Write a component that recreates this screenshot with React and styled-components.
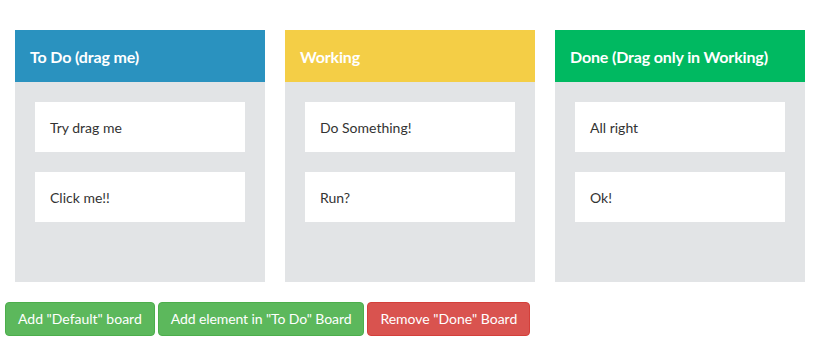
import React from "react";
import styled, { createGlobalStyle } from "styled-components";

const Global = createGlobalStyle`
  html, body { margin: 0; padding: 0; background: #fff; }
  body { font-family: Lato, "Helvetica Neue", Arial, sans-serif; color: #333; }
  * { box-sizing: border-box; }
`;

const Page = styled.div`
  display: flex;
  flex-direction: column;
`;

const Boards = styled.div`
  display: flex;
  gap: 20px;
  padding: 30px 0 0 15px;
`;

const Board = styled.div`
  width: 250px;
  background: #e2e4e6;
  display: flex;
  flex-direction: column;
`;

const Header = styled.div`
  height: 52px;
  padding: 0 15px;
  display: flex;
  align-items: center;
  background: ${(p) => p.$color};
  color: #fff;
  font-size: 16px;
  font-weight: 700;
  letter-spacing: -0.15px;
`;

const Drag = styled.div`
  min-height: 200px;
  padding: 20px;
  display: flex;
  flex-direction: column;
  gap: 20px;
`;

const Item = styled.div`
  background: #fff;
  height: 50px;
  padding: 0 15px;
  display: flex;
  align-items: center;
  font-size: 14px;
`;

const Actions = styled.div`
  display: flex;
  gap: 3px;
  padding: 20px 0 0 5px;
`;

const Button = styled.button`
  font-family: Lato, "Helvetica Neue", Arial, sans-serif;
  font-size: 14px;
  line-height: 20px;
  padding: 6px 12px;
  border-radius: 4px;
  color: #fff;
  cursor: pointer;
  letter-spacing: ${(p) => (p.$tight ? "-0.1px" : "0")};
  background: ${(p) => (p.$danger ? "#d9534f" : "#5cb85c")};
  border: 1px solid ${(p) => (p.$danger ? "#d43f3a" : "#4cae4c")};
`;

const boards = [
  { title: "To Do (drag me)", color: "#2a92bf", items: ["Try drag me", "Click me!!"] },
  { title: "Working", color: "#f4ce46", items: ["Do Something!", "Run?"] },
  { title: "Done (Drag only in Working)", color: "#00b961", items: ["All right", "Ok!"] },
];

export default function App() {
  return (
    <Page>
      <Global />
      <Boards>
        {boards.map((b) => (
          <Board key={b.title}>
            <Header $color={b.color}>{b.title}</Header>
            <Drag>
              {b.items.map((i) => (
                <Item key={i}>{i}</Item>
              ))}
            </Drag>
          </Board>
        ))}
      </Boards>
      <Actions>
        <Button>Add "Default" board</Button>
        <Button $tight>Add element in "To Do" Board</Button>
        <Button $danger>Remove "Done" Board</Button>
      </Actions>
    </Page>
  );
}
